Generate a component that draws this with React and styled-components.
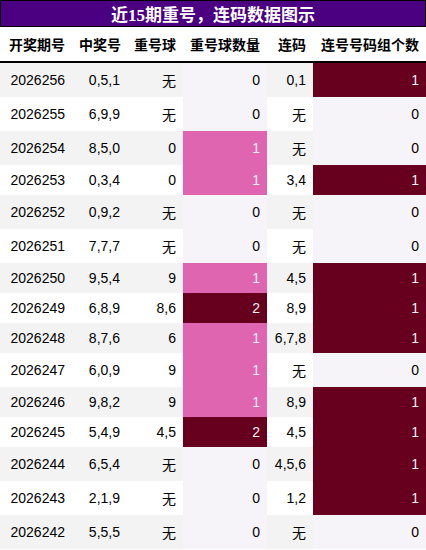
import React from "react";
import styled, { createGlobalStyle } from "styled-components";

const Global = createGlobalStyle`
  html, body { margin: 0; padding: 0; background: #ffffff; }
`;

const Wrap = styled.div`
  width: 426px;
  font-family: "Liberation Sans", "Noto Sans CJK SC", sans-serif;
  color: #000;
`;

const Title = styled.div`
  box-sizing: border-box;
  background: #4b0082;
  border: 1px solid #000;
  color: #ffffff;
  font-family: "Liberation Serif", "Noto Sans CJK SC", serif;
  font-weight: bold;
  font-size: 17px;
  text-align: center;
`;

const Table = styled.table`
  width: 426px;
  table-layout: fixed;
  border-collapse: collapse;
  border-spacing: 0;
  font-size: 14px;
`;

const HeadCell = styled.th`
  padding: 7px 7px;
  text-align: right;
  font-weight: bold;
  background: #ffffff;
  border-bottom: 2px solid #000;
  white-space: nowrap;
`;

const Cell = styled.td`
  padding: 7px 7px;
  text-align: right;
  white-space: nowrap;
  background: ${(p) => p.$bg};
  color: ${(p) => p.$fg || "#000"};
`;

const rows = [
  ["2026256", "0,5,1", "无", 0, "0,1", 1],
  ["2026255", "6,9,9", "无", 0, "无", 0],
  ["2026254", "8,5,0", "0", 1, "无", 0],
  ["2026253", "0,3,4", "0", 1, "3,4", 1],
  ["2026252", "0,9,2", "无", 0, "无", 0],
  ["2026251", "7,7,7", "无", 0, "无", 0],
  ["2026250", "9,5,4", "9", 1, "4,5", 1],
  ["2026249", "6,8,9", "8,6", 2, "8,9", 1],
  ["2026248", "8,7,6", "6", 1, "6,7,8", 1],
  ["2026247", "6,0,9", "9", 1, "无", 0],
  ["2026246", "9,8,2", "9", 1, "8,9", 1],
  ["2026245", "5,4,9", "4,5", 2, "4,5", 1],
  ["2026244", "6,5,4", "无", 0, "4,5,6", 1],
  ["2026243", "2,1,9", "无", 0, "1,2", 1],
  ["2026242", "5,5,5", "无", 0, "无", 0],
];

const countColor = { 0: "#f7f4f9", 1: "#df65b0", 2: "#67001f" };
const groupColor = { 0: "#f7f4f9", 1: "#67001f" };
const fgFor = (bg) => (bg === "#f7f4f9" ? "#000" : "#f1f1f1");

const widths = [72, 55, 56, 84, 46, 113];
const heads = ["开奖期号", "中奖号", "重号球", "重号球数量", "连码", "连号号码组个数"];

export default function App() {
  return (
    <Wrap>
      <Global />
      <Title>近15期重号，连码数据图示</Title>
      <Table>
        <colgroup>
          {widths.map((w, i) => (
            <col key={i} style={{ width: w }} />
          ))}
        </colgroup>
        <thead>
          <tr>
            {heads.map((h) => (
              <HeadCell key={h}>{h}</HeadCell>
            ))}
          </tr>
        </thead>
        <tbody>
          {rows.map((r, i) => {
            const stripe = i % 2 === 0 ? "#f3f3f3" : "#ffffff";
            const c4 = countColor[r[3]];
            const c6 = groupColor[r[5]];
            return (
              <tr key={r[0]}>
                <Cell $bg={stripe}>{r[0]}</Cell>
                <Cell $bg={stripe}>{r[1]}</Cell>
                <Cell $bg={stripe}>{r[2]}</Cell>
                <Cell $bg={c4} $fg={fgFor(c4)}>{r[3]}</Cell>
                <Cell $bg={stripe}>{r[4]}</Cell>
                <Cell $bg={c6} $fg={fgFor(c6)}>{r[5]}</Cell>
              </tr>
            );
          })}
        </tbody>
      </Table>
    </Wrap>
  );
}
